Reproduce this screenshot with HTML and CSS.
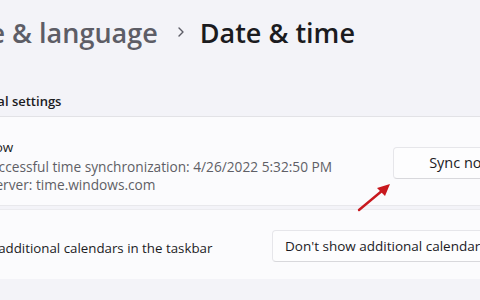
FILE: index.html
```html
<!DOCTYPE html>
<html>
<head>
<meta charset="utf-8">
<link rel="stylesheet" href="styles.css">
</head>
<body>
<div class="page">
  <div class="breadcrumb">
    <span class="crumb-parent">Time &amp; language</span>
    <svg class="chev" width="10" height="12" viewBox="0 0 10 12"><path d="M3 2 L7 6 L3 10" fill="none" stroke="#5c5c66" stroke-width="1.4" stroke-linecap="round" stroke-linejoin="round"/></svg>
    <span class="crumb-current">Date &amp; time</span>
  </div>
  <div class="section-title">Additional settings</div>
  <div class="card card-sync">
    <div class="card-text">
      <div class="row-title">Sync now</div>
      <div class="row-desc">Last successful time synchronization: 4/26/2022 5:32:50 PM</div>
      <div class="row-desc">Time server: time.windows.com</div>
    </div>
    <button class="btn">Sync now</button>
  </div>
  <div class="card card-cal">
    <div class="card-text">
      <div class="row-title">Show additional calendars in the taskbar</div>
    </div>
    <div class="dropdown">Don't show additional calendars</div>
  </div>
</div>
<svg class="arrow" width="50" height="40" viewBox="0 0 50 40">
  <path d="M6 34 L30 14" stroke="#c8181e" stroke-width="2.4" stroke-linecap="round"/>
  <path d="M37 8 L24 12 L32 20 Z" fill="#c8181e"/>
</svg>
</body>
</html>
```
FILE: styles.css
```css
html, body {
  margin: 0;
  padding: 0;
}
body {
  width: 480px;
  height: 300px;
  overflow: hidden;
  background: #f3f3f8;
  font-family: "Open Sans", "Noto Sans", sans-serif;
  position: relative;
}
.page {
  margin-left: -48px;
  width: 600px;
  padding-top: 12px;
}
.breadcrumb {
  display: flex;
  align-items: center;
  gap: 12px;
  font-size: 27px;
  font-weight: 600;
  height: 40px;
  white-space: nowrap;
  margin-left: -11px;
}
.crumb-parent {
  color: #5d5d66;
}
.crumb-current {
  color: #1b1b1f;
  margin-left: 2px;
}
.chev {
  margin-left: 6px;
}
.section-title {
  margin-top: 40px;
  margin-left: -8px;
  font-size: 13px;
  font-weight: 600;
  color: #1b1b1f;
  height: 24px;
  border-bottom: 1px solid #e2e2e6;
}
.card {
  display: flex;
  align-items: center;
  background: #fbfbfd;
  padding-right: 28px;
  margin-left: -12px;
  padding-left: 12px;
  box-sizing: border-box;
  width: 611px;
}
.card-sync {
  height: 89px;
  border-bottom: 1px solid #e8e8ec;
}
.card-cal {
  margin-top: 3px;
  height: 70px;
  border-top: 1px solid #ebebef;
}
.card-text {
  flex: 1;
  white-space: nowrap;
}
.row-title {
  font-size: 13.5px;
  color: #1b1b1f;
  line-height: 18px;
}
.row-desc {
  font-size: 13.7px;
  color: #5f5f66;
  line-height: 18px;
}
.card-sync .card-text {
  margin-top: 10px;
  margin-left: 2px;
}
.card-sync .row-title {
  margin-bottom: 2px;
}
.card-cal .row-title {
  font-size: 13.3px;
  margin-left: 9px;
  margin-top: 6px;
}
.btn {
  width: 136px;
  height: 32px;
  background: #fdfdfe;
  border: 1px solid #e6e6ea;
  border-bottom-color: #d8d8dc;
  border-radius: 4px;
  font-family: inherit;
  font-size: 14.5px;
  color: #1b1b1f;
  margin-top: 3px;
  margin-right: -6px;
}
.dropdown {
  width: 251px;
  height: 32px;
  box-sizing: border-box;
  background: #fdfdfe;
  border: 1px solid #e6e6ea;
  border-bottom-color: #d8d8dc;
  border-radius: 4px;
  font-size: 13.5px;
  color: #1b1b1f;
  line-height: 30px;
  padding-left: 12px;
  white-space: nowrap;
  overflow: hidden;
  margin-top: 2px;
}
.arrow {
  position: absolute;
  left: 353px;
  top: 176px;
}
```
